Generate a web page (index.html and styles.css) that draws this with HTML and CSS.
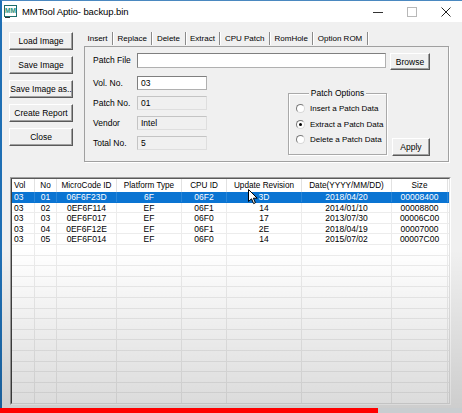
FILE: index.html
```html
<!DOCTYPE html>
<html>
<head>
<meta charset="utf-8">
<title>MMTool Aptio- backup.bin</title>
<link rel="stylesheet" href="styles.css">
</head>
<body>
<div class="window">
  <div class="titlebar">
    <svg class="app-icon" width="13" height="13" viewBox="0 0 13 13">
      <rect x="0.5" y="0.5" width="12" height="11" fill="#fff" stroke="#1d6d6a"/>
      <text x="6.5" y="8" text-anchor="middle" font-size="6.5" font-family="Liberation Sans" font-weight="bold" fill="#1f8f77">MM</text>
      <path d="M1 12.5H6" stroke="#333"/>
    </svg>
    <span class="title">MMTool Aptio- backup.bin</span>
    <div class="controls">
      <span class="ctl"><svg width="10" height="10" viewBox="0 0 10 10"><path d="M0 5.5H10" stroke="#333"/></svg></span>
      <span class="ctl"><svg width="10" height="10" viewBox="0 0 10 10"><rect x="0.5" y="0.5" width="9" height="9" fill="none" stroke="#b8b8b8"/></svg></span>
      <span class="ctl close"><svg width="10" height="10" viewBox="0 0 10 10"><path d="M0.5 0.5L9.5 9.5M9.5 0.5L0.5 9.5" stroke="#222"/></svg></span>
    </div>
  </div>

  <div class="body">
    <div class="top">
      <div class="side">
        <div class="btn">Load Image</div>
        <div class="btn">Save Image</div>
        <div class="btn">Save Image as..</div>
        <div class="btn">Create Report</div>
        <div class="btn">Close</div>
      </div>

      <div class="tabs">
        <div class="tabstrip">
          <span class="tab">Insert</span><span class="sep"></span>
          <span class="tab">Replace</span><span class="sep"></span>
          <span class="tab">Delete</span><span class="sep"></span>
          <span class="tab">Extract</span><span class="sep"></span>
          <span class="tab active">CPU Patch</span><span class="sep"></span>
          <span class="tab">RomHole</span><span class="sep"></span>
          <span class="tab">Option ROM</span><span class="sep"></span>
        </div>
        <div class="panel">
          <div class="row1">
            <span class="lbl">Patch File</span>
            <div class="edit file"></div>
            <div class="btn browse">Browse</div>
          </div>
          <div class="lower">
            <div class="fields">
              <div class="frow"><span class="lbl">Vol. No.</span><div class="edit small">03</div></div>
              <div class="frow"><span class="lbl">Patch No.</span><div class="edit small ro">01</div></div>
              <div class="frow"><span class="lbl">Vendor</span><div class="edit small ro">Intel</div></div>
              <div class="frow"><span class="lbl">Total No.</span><div class="edit small ro">5</div></div>
            </div>
            <div class="group">
              <span class="group-title">Patch Options</span>
              <div class="radio"><span class="dot"></span>Insert a Patch Data</div>
              <div class="radio"><span class="dot on"></span>Extract a Patch Data</div>
              <div class="radio"><span class="dot"></span>Delete a Patch Data</div>
            </div>
            <div class="btn apply">Apply</div>
          </div>
        </div>
      </div>
    </div>

    <div class="list">
      <div class="list-inner">
        <div class="hdr">
          <span>Vol</span><span>No</span><span>MicroCode ID</span><span>Platform Type</span><span>CPU ID</span><span>Update Revision</span><span>Date(YYYY/MM/DD)</span><span>Size</span>
        </div>
        <div class="row sel"><span>03</span><span>01</span><span>06F6F23D</span><span>6F</span><span>06F2</span><span>3D</span><span>2018/04/20</span><span>00008400</span></div>
        <div class="row"><span>03</span><span>02</span><span>0EF6F114</span><span>EF</span><span>06F1</span><span>14</span><span>2014/01/10</span><span>00008800</span></div>
        <div class="row"><span>03</span><span>03</span><span>0EF6F017</span><span>EF</span><span>06F0</span><span>17</span><span>2013/07/30</span><span>00006C00</span></div>
        <div class="row"><span>03</span><span>04</span><span>0EF6F12E</span><span>EF</span><span>06F1</span><span>2E</span><span>2018/04/19</span><span>00007000</span></div>
        <div class="row"><span>03</span><span>05</span><span>0EF6F014</span><span>EF</span><span>06F0</span><span>14</span><span>2015/07/02</span><span>00007C00</span></div>
        <div class="row"><span></span><span></span><span></span><span></span><span></span><span></span><span></span><span></span></div>
        <div class="row"><span></span><span></span><span></span><span></span><span></span><span></span><span></span><span></span></div>
        <div class="row"><span></span><span></span><span></span><span></span><span></span><span></span><span></span><span></span></div>
        <div class="row"><span></span><span></span><span></span><span></span><span></span><span></span><span></span><span></span></div>
        <div class="row"><span></span><span></span><span></span><span></span><span></span><span></span><span></span><span></span></div>
        <div class="row"><span></span><span></span><span></span><span></span><span></span><span></span><span></span><span></span></div>
        <div class="row"><span></span><span></span><span></span><span></span><span></span><span></span><span></span><span></span></div>
        <div class="row"><span></span><span></span><span></span><span></span><span></span><span></span><span></span><span></span></div>
        <div class="row"><span></span><span></span><span></span><span></span><span></span><span></span><span></span><span></span></div>
        <div class="row"><span></span><span></span><span></span><span></span><span></span><span></span><span></span><span></span></div>
        <div class="row"><span></span><span></span><span></span><span></span><span></span><span></span><span></span><span></span></div>
        <div class="row"><span></span><span></span><span></span><span></span><span></span><span></span><span></span><span></span></div>
        <div class="row"><span></span><span></span><span></span><span></span><span></span><span></span><span></span><span></span></div>
        <div class="row"><span></span><span></span><span></span><span></span><span></span><span></span><span></span><span></span></div>
        <div class="row"><span></span><span></span><span></span><span></span><span></span><span></span><span></span><span></span></div>
      </div>
    </div>
  </div>
</div>

<svg class="cursor" width="11" height="16" viewBox="0 0 11 16">
  <path d="M0.5 0.5V12.5L3.5 9.8L5.6 14.6L7.4 13.8L5.4 9.2H9.2Z" fill="#fff" stroke="#000" stroke-width="1" stroke-linejoin="round"/>
</svg>
<div class="shade"></div>
<div class="progress"><div class="played"></div></div>
</body>
</html>
```

FILE: styles.css
```css
html, body {
  margin: 0;
  padding: 0;
}

body {
  width: 462px;
  height: 413px;
  overflow: hidden;
  position: relative;
  background: #f0f0f0;
  font-family: "Liberation Sans", Arial, sans-serif;
  font-size: 8.5px;
  color: #000;
}

.window {
  border-top: 1px solid #4a88c0;
  border-left: 2px solid #1f6fb4;
  height: 412px;
}

/* title bar */
.titlebar {
  height: 21px;
  background: #fff;
  display: flex;
  align-items: center;
}

.app-icon {
  margin-left: 2px;
  flex: none;
}

.title {
  margin-left: 5px;
  font-size: 9.5px;
  letter-spacing: -0.1px;
  color: #000;
}

.controls {
  margin-left: auto;
  display: flex;
  height: 100%;
}

.ctl {
  width: 34px;
  display: flex;
  align-items: center;
  justify-content: center;
}

.ctl.close {
  width: 33px;
}

/* body */
.body {
  display: flex;
  flex-direction: column;
  padding: 8px 0 0 7px;
}

.top {
  display: flex;
  align-items: flex-start;
}

.side {
  display: flex;
  flex-direction: column;
  gap: 6px;
  margin-top: 2px;
  width: 64px;
}

.btn {
  height: 18px;
  box-sizing: border-box;
  background: #f0f0f0;
  border: 1px solid;
  border-color: #ffffff #5a5a5a #5a5a5a #ffffff;
  box-shadow: inset -1px -1px 0 #a0a0a0;
  display: flex;
  align-items: center;
  justify-content: center;
  white-space: nowrap;
}

/* tabs */
.tabs {
  margin-left: 10px;
}

.tabstrip {
  display: flex;
  height: 16px;
  align-items: center;
  font-size: 8px;
}

.tab {
  padding: 0 4.5px;
  line-height: 13px;
}

.sep {
  width: 1px;
  height: 13px;
  background: #8a8a8a;
  box-shadow: 1px 0 0 #fff;
}

.panel {
  margin-left: 1px;
  width: 365px;
  height: 116px;
  box-sizing: border-box;
  border: 1px solid #a0a0a0;
  box-shadow: 1px 1px 0 #fff;
  padding: 6px 0 0 8px;
}

.row1 {
  display: flex;
  align-items: flex-start;
}

.lbl {
  width: 44px;
  flex: none;
  line-height: 15px;
  white-space: nowrap;
}

.edit {
  height: 15px;
  box-sizing: border-box;
  background: #fff;
  border: 1px solid #b0b0b0;
  border-top-color: #7f7f7f;
  border-left-color: #7f7f7f;
  padding: 0 3px;
  line-height: 12px;
}

.file {
  width: 249px;
}

.browse {
  width: 40px;
  height: 17px;
  margin-left: 4px;
}

.lower {
  display: flex;
  align-items: flex-start;
  margin-top: 6px;
}

.fields {
  display: flex;
  flex-direction: column;
  gap: 6px;
}

.frow {
  display: flex;
  height: 14px;
}

.frow .lbl {
  line-height: 14px;
}

.edit.small {
  width: 70px;
  height: 14px;
}

.edit.ro {
  background: #f0f0f0;
  border-color: #c4c4c4 #dedede #dedede #c4c4c4;
}

.group {
  margin-left: 81px;
  margin-top: 17px;
  width: 99px;
  height: 62px;
  box-sizing: border-box;
  border: 1px solid #a9a9a9;
  box-shadow: 1px 1px 0 #fff, inset 1px 1px 0 #fff;
  padding-top: 7px;
}

.group-title {
  display: block;
  width: max-content;
  margin: -14px auto 2px;
  padding: 0 2px;
  background: #f0f0f0;
  line-height: 12px;
}

.radio {
  display: flex;
  align-items: center;
  height: 15.5px;
  padding-left: 7px;
  white-space: nowrap;
  font-size: 8px;
}

.dot {
  width: 9px;
  height: 9px;
  box-sizing: border-box;
  border-radius: 50%;
  border: 1px solid #7a7a7a;
  border-right-color: #d8d8d8;
  border-bottom-color: #d8d8d8;
  background: #fff;
  margin-right: 5px;
  display: flex;
  align-items: center;
  justify-content: center;
  flex: none;
}

.dot.on::after {
  content: "";
  width: 3px;
  height: 3px;
  border-radius: 50%;
  background: #000;
}

.apply {
  width: 38px;
  margin-left: 5px;
  margin-top: 62px;
}

/* list view */
.list {
  margin: 15px 0 0 1px;
  width: 441px;
  height: 228px;
  box-sizing: border-box;
  border: 1px solid;
  border-color: #a0a0a0 #ffffff #ffffff #a0a0a0;
}

.list-inner {
  height: 100%;
  box-sizing: border-box;
  border: 1px solid;
  border-color: #5a5a5a #e3e3e3 #e3e3e3 #404040;
  background: #fff;
  overflow: hidden;
}

.hdr,
.row {
  display: grid;
  grid-template-columns: 23px 22px 60px 65px 45px 75px 90px 56px;
}

.hdr {
  height: 13px;
  font-size: 8.2px;
}

.hdr > span {
  border-right: 1px solid #e2e2e2;
  text-align: center;
  line-height: 13px;
  white-space: nowrap;
}

.hdr > span:first-child,
.row > span:first-child {
  text-align: left;
  padding-left: 2px;
}

.row {
  height: 10.6px;
  box-sizing: border-box;
  border-bottom: 1px solid #ececec;
}

.row > span {
  border-right: 1px solid #ececec;
  text-align: center;
  line-height: 10px;
  white-space: nowrap;
}

.row.sel {
  background: #0a74d2;
  color: #fff;
  border-bottom-color: #0a74d2;
}

.row.sel > span {
  border-right-color: #2a86d8;
}

/* video overlays */
.cursor {
  position: absolute;
  left: 248px;
  top: 189px;
}

.shade {
  position: absolute;
  left: 0;
  right: 0;
  top: 250px;
  bottom: 0;
  background: linear-gradient(rgba(0, 0, 0, 0), rgba(0, 0, 0, 0.15));
  pointer-events: none;
}

.progress {
  position: absolute;
  left: 0;
  right: 0;
  bottom: 0;
  height: 5px;
  background: #c9cdd0;
}

.played {
  width: 378px;
  height: 100%;
  background: #ff0000;
}
```
